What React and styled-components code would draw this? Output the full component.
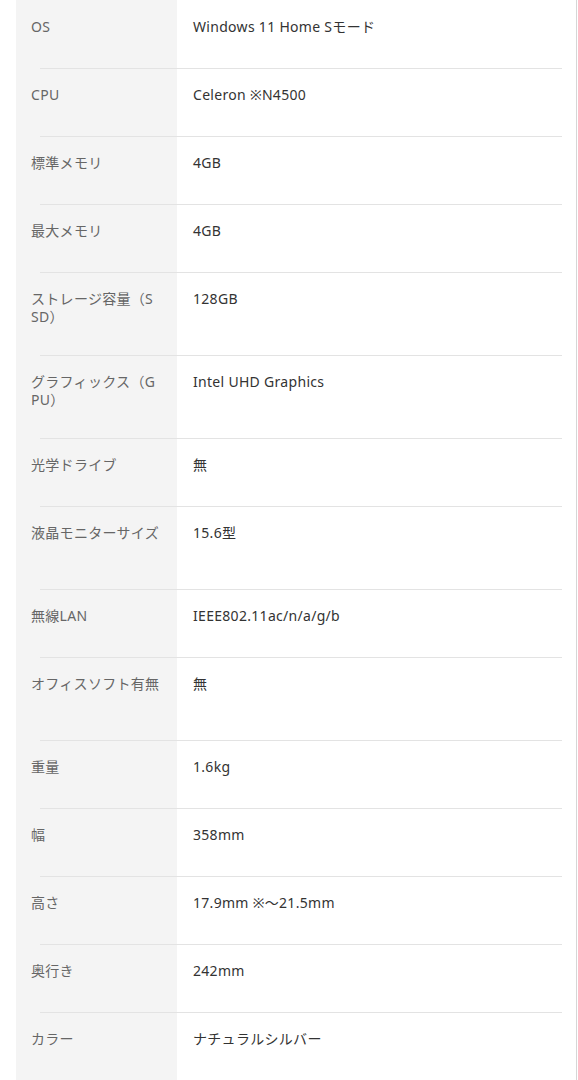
import React from 'react';
import styled, { createGlobalStyle } from 'styled-components';

const GlobalStyle = createGlobalStyle`
  body {
    margin: 0;
    background: #fff;
    font-family: "Noto Sans", "Noto Sans CJK JP", sans-serif;
  }
`;

const Page = styled.div`
  width: 577px;
  min-height: 1080px;
  border-right: 1px solid #d6d6d6;
  padding-left: 16px;
  box-sizing: border-box;
`;

const Table = styled.div`
  display: flex;
  flex-direction: column;
  min-height: 1080px;
  padding-top: 1px;
  box-sizing: border-box;
  background: linear-gradient(to right, #f4f4f4 0, #f4f4f4 161px, #fff 161px);
`;

const Row = styled.div`
  display: grid;
  grid-template-columns: 161px 1fr;
  height: ${(p) => (p.tall ? '82px' : '67px')};
  font-size: 14px;
  line-height: 18px;
  letter-spacing: 0.3px;
`;

const Label = styled.div`
  padding: 17px 16px 0 15px;
  color: #666;
  word-break: break-all;
`;

const Value = styled.div`
  padding: 17px 16px 0 16px;
  color: #333;
`;

const Divider = styled.div`
  height: 1px;
  margin: 0 14px 0 24px;
  background: #e3e3e3;
`;

const specs = [
  ['OS', 'Windows 11 Home Sモード'],
  ['CPU', 'Celeron ※N4500'],
  ['標準メモリ', '4GB'],
  ['最大メモリ', '4GB'],
  ['ストレージ容量（SSD）', '128GB', true],
  ['グラフィックス（GPU）', 'Intel UHD Graphics', true],
  ['光学ドライブ', '無'],
  ['液晶モニターサイズ', '15.6型', true],
  ['無線LAN', 'IEEE802.11ac/n/a/g/b'],
  ['オフィスソフト有無', '無', true],
  ['重量', '1.6kg'],
  ['幅', '358mm'],
  ['高さ', '17.9mm ※～21.5mm'],
  ['奥行き', '242mm'],
  ['カラー', 'ナチュラルシルバー'],
];

const App = () => {
  return (
    <>
      <GlobalStyle />
      <Page>
        <Table>
          {specs.map(([label, value, tall], i) => (
            <React.Fragment key={label}>
              {i > 0 && <Divider />}
              <Row tall={tall}>
                <Label>{label}</Label>
                <Value>{value}</Value>
              </Row>
            </React.Fragment>
          ))}
        </Table>
      </Page>
    </>
  );
};

export default App;
